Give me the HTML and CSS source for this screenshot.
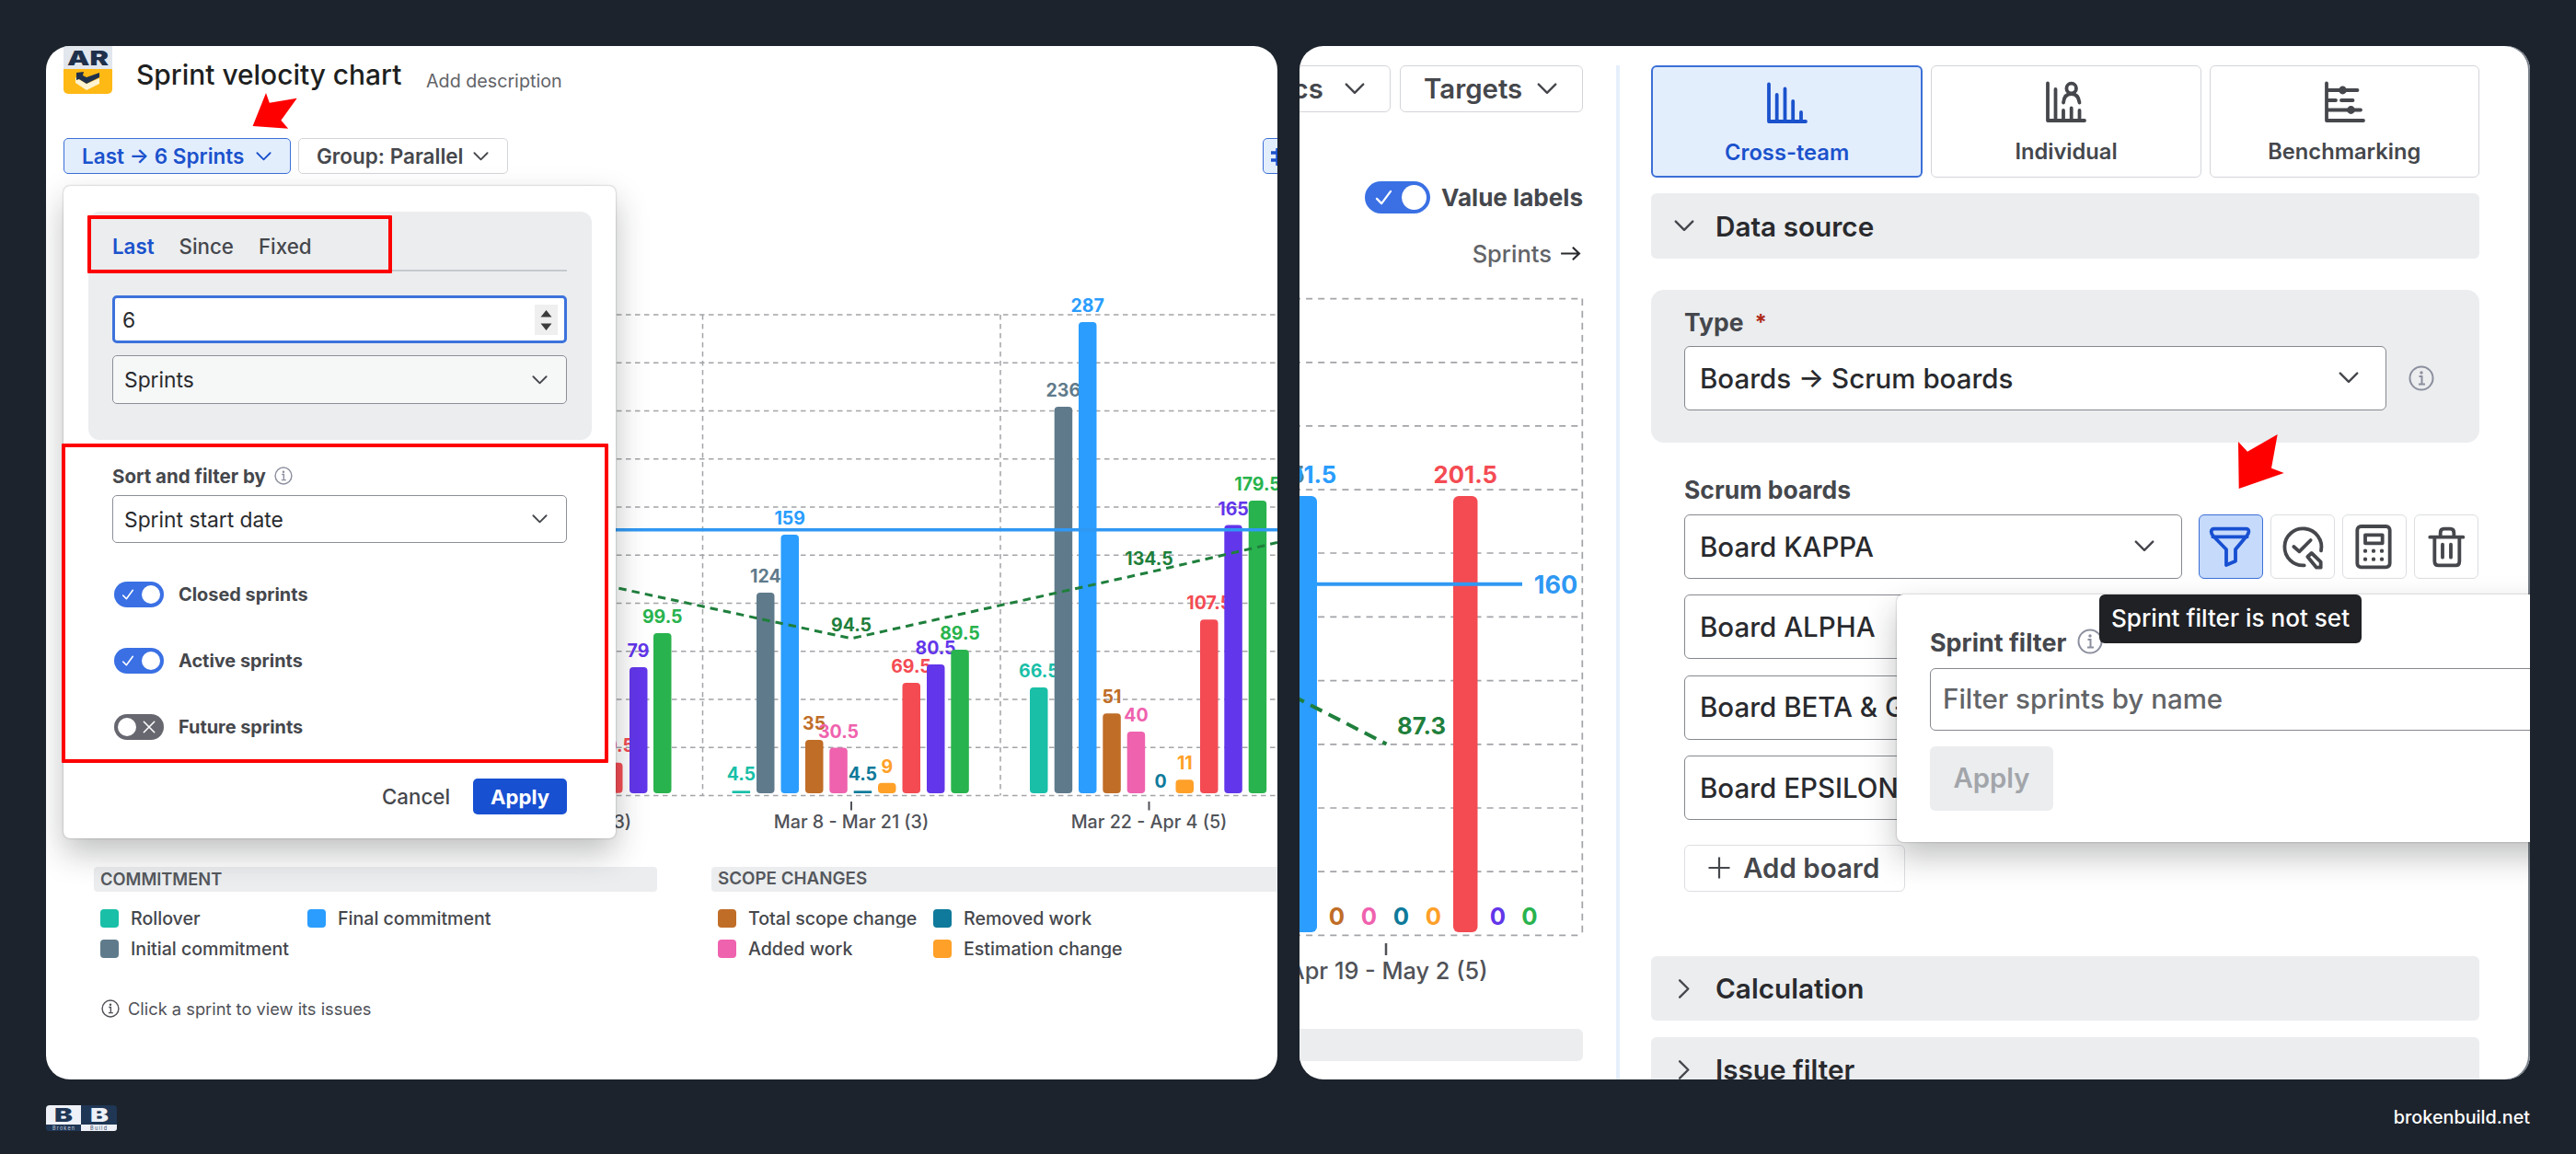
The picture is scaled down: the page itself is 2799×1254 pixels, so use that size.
FILE: index.html
```html
<!DOCTYPE html>
<html lang="en">
<head>
<meta charset="utf-8">
<title>Sprint velocity chart</title>
<link rel="stylesheet" href="styles.css">
</head>
<body>
<svg class="defs" aria-hidden="true">
  <symbol id="chevron" viewBox="0 0 20 12"><path d="M1.5 1.5 10 10l8.500-8.500" fill="none" stroke="currentColor" stroke-width="2.200" stroke-linecap="round" stroke-linejoin="round"/></symbol>
  <symbol id="info" viewBox="0 0 28 28"><g fill="none" stroke="currentColor" stroke-width="2"><circle cx="14" cy="14" r="12.500"/><path d="M11.500 12h3v8.500M11 20.500h7"/></g><circle cx="14" cy="8" r="1.700" fill="currentColor"/></symbol>
  <symbol id="check" viewBox="0 0 20 18"><path d="M2 10.500 7.500 16 18 2" fill="none" stroke="#fff" stroke-width="2.400" stroke-linecap="round" stroke-linejoin="round"/></symbol>
</svg>

<main class="stage">
  <section class="card card-chart">
    <header class="head">
      <svg class="app-logo" viewBox="0 0 53 52">
        <path d="M0 0h53v26H0z" fill="#e2e6ed"/>
        <path d="M0 25h53v22a5 5 0 0 1-5 5H5a5 5 0 0 1-5-5z" fill="#ffb915"/>
        <text x="4" y="21" textLength="45" lengthAdjust="spacingAndGlyphs" font-size="21.500" font-weight="900" fill="#20304b">AR</text>
        <path d="m13 34 12 7 14-6v6L25 48l-12-8z" fill="#fff3d0"/>
        <path d="m14 29 8-1-1 4 4 2 14-5v5l-14 7-8-5-3 1z" fill="#20304b"/>
      </svg>
      <h1 class="title">Sprint velocity chart</h1>
      <span class="desc">Add description</span>
    </header>
    <div class="toolbar">
      <button class="btn btn-active">Last → 6 Sprints <svg class="chev"><use href="#chevron"/></svg></button>
      <button class="btn btn-group">Group: Parallel <svg class="chev"><use href="#chevron"/></svg></button>
      <button class="btn btn-active btn-edge"><svg viewBox="0 0 24 24"><path d="M2 8h20M2 16h20M9 3v10M9 12v10" stroke="currentColor" stroke-width="3.500" fill="none"/></svg></button>
    </div>

    <svg class="chart" viewBox="50 189 1338 741">
      <g class="grid grid-s">
        <path d="M600 341.900H1388M600 394.200H1388M600 446.400H1388M600 498.700H1388M600 551H1388M600 603.200H1388M600 655.500H1388M600 707.800H1388M600 760H1388M600 812.300H1388M600 864.600H1388"/>
        <path d="M763.500 341.900V864.600M1087 341.900V864.600"/>
      </g>
      <g class="bars labels-s">
        <g class="red"><rect x="657" y="828.700" width="19.500" height="33" rx="4"/><text x="667" y="817">20.5</text></g>
        <g class="violet"><rect x="684" y="725" width="19.500" height="137" rx="4"/><text x="693.500" y="713.500">79</text></g>
        <g class="green"><rect x="710" y="688" width="19.500" height="174" rx="4"/><text x="719.700" y="676.500">99.5</text></g>

        <g class="teal"><rect x="795.600" y="859.300" width="19.500" height="2.700"/><text x="805.400" y="848">4.5</text></g>
        <g class="slate"><rect x="822" y="644" width="19.500" height="218" rx="4"/><text x="831.800" y="632.500">124</text></g>
        <g class="blue"><rect x="848.500" y="581" width="19.500" height="281" rx="4"/><text x="858.200" y="569.500">159</text></g>
        <g class="brown"><rect x="875" y="804" width="19.500" height="58" rx="4"/><text x="884.600" y="793">35</text></g>
        <g class="pink"><rect x="901.300" y="812.400" width="19.500" height="49.600" rx="4"/><text x="911" y="801.500">30.5</text></g>
        <g class="sea"><rect x="927.700" y="859.300" width="19.500" height="2.700"/><text x="937.400" y="848">4.5</text></g>
        <g class="orange"><rect x="954" y="850.800" width="19.500" height="11.200" rx="4"/><text x="963.800" y="839.500">9</text></g>
        <g class="red"><rect x="980.500" y="742" width="19.500" height="120" rx="4"/><text x="990" y="731">69.5</text></g>
        <g class="violet"><rect x="1007" y="722" width="19.500" height="140" rx="4"/><text x="1016.500" y="710.500">80.5</text></g>
        <g class="green"><rect x="1033.300" y="706" width="19.500" height="156" rx="4"/><text x="1043" y="695">89.5</text></g>

        <g class="teal"><rect x="1119" y="747" width="19.500" height="115" rx="4"/><text x="1128.900" y="736">66.5</text></g>
        <g class="slate"><rect x="1145.700" y="442" width="19.500" height="420" rx="4"/><text x="1155.300" y="430.500">236</text></g>
        <g class="blue"><rect x="1172" y="350" width="19.500" height="512" rx="4"/><text x="1181.700" y="338.700">287</text></g>
        <g class="brown"><rect x="1198.300" y="775.300" width="19.500" height="86.700" rx="4"/><text x="1208" y="764">51</text></g>
        <g class="pink"><rect x="1224.700" y="795" width="19.500" height="67" rx="4"/><text x="1234.500" y="784">40</text></g>
        <g class="sea"><text x="1261" y="856">0</text></g>
        <g class="orange"><rect x="1277.500" y="847.300" width="19.500" height="14.700" rx="4"/><text x="1287.300" y="836">11</text></g>
        <g class="red"><rect x="1304" y="673.300" width="19.500" height="188.700" rx="4"/><text x="1313.700" y="662">107.5</text></g>
        <g class="violet"><rect x="1330.300" y="570.500" width="19.500" height="291.500" rx="4"/><text x="1340" y="559.500">165</text></g>
        <g class="green"><rect x="1356.700" y="544" width="19.500" height="318" rx="4"/><text x="1366.500" y="532.500">179.5</text></g>
      </g>
      <path d="M600 575.800H1388" stroke="#2f98f3" stroke-width="3.500"/>
      <path d="M601.500 624 925 693.800 1248.500 621.900 1388 589.500" fill="none" stroke="#1f7f3c" stroke-width="3" stroke-dasharray="8.500 6"/>
      <g class="labels-s trend"><text x="925" y="686">94.5</text><text x="1248.500" y="613.800">134.5</text></g>
      <path d="M925 871v9.500M1248.500 871v9.500" stroke="#505258" stroke-width="2"/>
      <g class="axis-s"><text x="601.500" y="900">Feb 22 - Mar 7 (3)</text><text x="925" y="900">Mar 8 - Mar 21 (3)</text><text x="1248.500" y="900">Mar 22 - Apr 4 (5)</text></g>
    </svg>

    <div class="legends">
      <div class="legend">
        <h2 class="legend-title">COMMITMENT</h2>
        <ul class="keys keys-a">
          <li class="key"><i class="swatch bg-teal"></i>Rollover</li>
          <li class="key"><i class="swatch bg-blue"></i>Final commitment</li>
          <li class="key"><i class="swatch bg-slate"></i>Initial commitment</li>
        </ul>
      </div>
      <div class="legend">
        <h2 class="legend-title legend-title-wide">SCOPE CHANGES</h2>
        <ul class="keys keys-b">
          <li class="key"><i class="swatch bg-brown"></i>Total scope change</li>
          <li class="key"><i class="swatch bg-sea"></i>Removed work</li>
          <li class="key"><i class="swatch bg-pink"></i>Added work</li>
          <li class="key"><i class="swatch bg-orange"></i>Estimation change</li>
        </ul>
      </div>
    </div>
    <p class="hint"><svg class="hint-icon"><use href="#info"/></svg>Click a sprint to view its issues</p>

    <div class="pop pop-range">
      <div class="range">
        <nav class="tabs"><a class="tab tab-on">Last</a><a class="tab">Since</a><a class="tab">Fixed</a></nav>
        <div class="field field-num">6
          <svg class="spin" viewBox="0 0 25 33"><path d="M0 0h25v33H0z" fill="#efefef"/><path d="m12.500 6 6 7.500h-12zM12.500 28l6-7.500h-12z" fill="#3c3c3c"/></svg>
        </div>
        <div class="field field-muted">Sprints <svg class="chev"><use href="#chevron"/></svg></div>
      </div>
      <div class="sorting">
        <div class="label">Sort and filter by <svg class="info-s"><use href="#info"/></svg></div>
        <div class="field">Sprint start date <svg class="chev"><use href="#chevron"/></svg></div>
        <div class="switches">
          <div class="switch-row"><span class="toggle"><svg class="tick"><use href="#check"/></svg><i class="knob"></i></span>Closed sprints</div>
          <div class="switch-row"><span class="toggle"><svg class="tick"><use href="#check"/></svg><i class="knob"></i></span>Active sprints</div>
          <div class="switch-row"><span class="toggle toggle-off"><i class="knob"></i><svg class="cross" viewBox="0 0 16 16"><path d="m1.500 1.500 13 13m0-13-13 13" stroke="#fff" stroke-width="1.800" stroke-linecap="round"/></svg></span>Future sprints</div>
        </div>
        <div class="actions"><span class="cancel">Cancel</span><button class="apply">Apply</button></div>
      </div>
    </div>

    <div class="mark mark-tabs"></div>
    <div class="mark mark-filter"></div>
    <svg class="pointer pointer-a" viewBox="274 100 50 41"><path d="m289 101 3.800 10.700 29.900-5-17.300 24 7.800 9-38.600-2.700z" fill="#fe0000"/></svg>
  </section>

  <section class="card card-config">
    <div class="preview">
      <div class="preview-bar">
        <button class="btn-lg btn-metrics">Metrics <svg class="chev-lg"><use href="#chevron"/></svg></button>
        <button class="btn-lg btn-targets">Targets <svg class="chev-lg"><use href="#chevron"/></svg></button>
      </div>
      <div class="values"><span class="toggle toggle-lg"><svg class="tick"><use href="#check"/></svg><i class="knob"></i></span>Value labels</div>
      <div class="order">Sprints <svg class="order-arrow" viewBox="0 0 24 18"><path d="M1 9h21M14.500 1.800 22 9l-7.500 7.200" fill="none" stroke="#292a2e" stroke-width="2.300"/></svg></div>
      <svg class="chart-lg" viewBox="1412 292 308 800">
        <g class="grid grid-l">
          <path d="M1406 324.600H1716M1406 393.800H1716M1406 462.900H1716M1406 532.100H1716M1406 601H1716M1406 670.400H1716M1406 739.600H1716M1406 808.800H1716M1406 878H1716M1406 947.100H1716M1406 1016.300H1716"/>
          <path d="M1719.300 324.600V1016.300" stroke-dasharray="7.500 5.600"/>
        </g>
        <g class="labels-l">
          <g class="slate"><text x="1383" y="525">201.5</text></g>
          <g class="blue"><rect x="1404" y="539" width="27" height="474" rx="6"/><text x="1417.600" y="525">201.5</text></g>
          <g class="brown"><text x="1452.500" y="1004.800">0</text></g>
          <g class="pink"><text x="1487.500" y="1004.800">0</text></g>
          <g class="sea"><text x="1522.500" y="1004.800">0</text></g>
          <g class="orange"><text x="1557.500" y="1004.800">0</text></g>
          <g class="red"><rect x="1579" y="539" width="26.500" height="474" rx="6"/><text x="1592.300" y="525">201.5</text></g>
          <g class="violet"><text x="1627.300" y="1004.800">0</text></g>
          <g class="green"><text x="1662" y="1004.800">0</text></g>
          <path d="M1431 634.700H1654" stroke="#2f98f3" stroke-width="4"/>
          <g class="target"><text x="1690.500" y="645">160</text></g>
          <path d="m1408 758 98.500 50.500" fill="none" stroke="#1f7f3c" stroke-width="4" stroke-dasharray="14 8" stroke-dashoffset="4"/>
          <g class="trend"><text x="1544.500" y="797.500">87.3</text></g>
        </g>
        <path d="M1506 1025v13" stroke="#505258" stroke-width="2.500"/>
        <text class="axis-l" x="1616.500" y="1063.500">Apr 19 - May 2 (5)</text>
      </svg>
      <div class="preview-strip"></div>
    </div>
    <div class="divider"></div>

    <div class="config">
      <div class="modes">
        <div class="mode mode-on"><svg class="mode-icon" viewBox="0 0 45 46"><path d="M3 2.500V43H43M11.700 14v28M20.500 7.500v34M29.200 21v21M38 33v9"/></svg>Cross-team</div>
        <div class="mode"><svg class="mode-icon" viewBox="0 0 45 46"><path d="M3 2.500V43H43M11.500 9v33M20 32v10M28.700 29.500V42M37.500 32v10M20 23.500c.5-6 3.500-9.500 8.700-9.500s8 3.500 8.800 9.500"/><circle cx="28.700" cy="8" r="5.300"/></svg>Individual</div>
        <div class="mode"><svg class="mode-icon" viewBox="0 0 45 46"><path d="M3 2.500V43H43M3 10h33.500M3 21h10M19 21h12.500M3 31.500h37"/><circle cx="20.500" cy="10" r="2.500"/><circle cx="29.500" cy="31.500" r="2.500"/></svg>Benchmarking</div>
      </div>
      <div class="section"><svg class="chev-lg"><use href="#chevron"/></svg>Data source</div>
      <div class="type-box">
        <div class="label-lg">Type <span class="req">*</span></div>
        <div class="type-row">
          <div class="field-lg field-type">Boards → Scrum boards <svg class="chev-lg"><use href="#chevron"/></svg></div>
          <svg class="info-l"><use href="#info"/></svg>
        </div>
      </div>
      <div class="boards">
        <div class="label-lg label-boards">Scrum boards</div>
        <div class="board-row">
          <div class="field-lg field-board">Board KAPPA <svg class="chev-lg"><use href="#chevron"/></svg></div>
          <div class="tools">
            <button class="tool tool-on"><svg viewBox="0 0 210 210"><path d="M50 47H154Q164 47 163 57 162 65 155 72L120 114V152L90 165V114L49 72Q41 64 41 56 42 47 50 47ZM46 73H158"/></svg></button>
            <button class="tool"><svg viewBox="0 0 210 210"><path d="M165 118A60 60 0 1 0 110 166M76 105 94 121 131 84M121 138 134 126 164 155V173H150Z"/></svg></button>
            <button class="tool"><svg viewBox="0 0 210 210"><rect x="49" y="39" width="106" height="133" rx="12"/><rect x="75" y="67" width="56" height="27"/><path class="dots" d="M75 119h.1M102 119h.1M129 119h.1M75 146h.1M102 146h.1M129 146h.1"/></svg></button>
            <button class="tool"><svg viewBox="0 0 210 210"><path d="M52 74H160M86 72V60Q86 47 98 47H118Q130 47 130 60V72M67 76V152Q67 166 80 166H136Q148 166 148 152V76M93 98V140M120 98V140"/></svg></button>
          </div>
        </div>
        <div class="field-lg field-board">Board ALPHA</div>
        <div class="field-lg field-board">Board BETA &amp; GAMMA</div>
        <div class="field-lg field-board">Board EPSILON</div>
        <button class="add"><svg class="plus" viewBox="0 0 24 24"><path d="M12 .5v23M.5 12h23" stroke="currentColor" stroke-width="2.200"/></svg>Add board</button>
      </div>
      <div class="section section-calc"><svg class="chev-lg chev-side"><use href="#chevron"/></svg>Calculation</div>
      <div class="section section-filter"><svg class="chev-lg chev-side"><use href="#chevron"/></svg>Issue filter</div>
    </div>

    <div class="pop pop-sprint">
      <div class="label-lg">Sprint filter <svg class="info-l info-near"><use href="#info"/></svg></div>
      <div class="field-lg field-filter">Filter sprints by name</div>
      <button class="apply-off">Apply</button>
    </div>
    <div class="tooltip">Sprint filter is not set</div>
    <svg class="pointer pointer-b" viewBox="2431 471 52 61"><path d="m2432 480 10 10.700L2474.700 472l-6.700 36.700 13.700 5.300-49 17z" fill="#fe0000"/></svg>
  </section>
</main>

<footer class="foot">
  <svg class="bb" viewBox="0 0 77 28">
    <path d="M38 0h35a4 4 0 0 1 4 4v17H38z" fill="#1f3655"/><path d="M4 0h34v21H0V4a4 4 0 0 1 4-4z" fill="#eef1f7"/>
    <path d="M0 21h38v7H3a3 3 0 0 1-3-3z" fill="#1f3655"/><path d="M38 21h39v4a3 3 0 0 1-3 3H38z" fill="#eef1f7"/>
    <text x="9" y="18" textLength="20" lengthAdjust="spacingAndGlyphs" font-size="20.500" font-weight="900" fill="#1f3655">B</text>
    <text x="48" y="18" textLength="20" lengthAdjust="spacingAndGlyphs" font-size="20.500" font-weight="900" fill="#eef1f7">B</text>
    <text x="7" y="26.500" textLength="24" font-size="5.500" fill="#c5cddb">Broken</text>
    <text x="48" y="26.500" textLength="18" font-size="5.500" fill="#33476a">Build</text>
  </svg>
  <span class="site">brokenbuild.net</span>
</footer>
</body>
</html>
```
FILE: styles.css
```css
* { box-sizing: border-box; }
body {
  margin: 0;
  width: 2799px;
  height: 1254px;
  overflow: hidden;
  background: #1c232c;
  color: #292a2e;
  font-family: Inter, "Liberation Sans", sans-serif;
  font-weight: 400;
}
h1, h2, p, ul { margin: 0; padding: 0; list-style: none; }
button { font-family: inherit; padding: 0; background: none; border: 0; color: inherit; }
svg { display: block; flex: none; overflow: visible; }
.defs { position: absolute; width: 0; height: 0; }

.stage { display: flex; gap: 24px; padding: 50px 50px 0; height: 1173px; }
.card { position: relative; flex: none; overflow: hidden; height: 1123px; border-radius: 26px; background: #fff; }
.card-chart { width: 1338px; }
.card-config { display: flex; width: 1337px; box-shadow: inset -2px 0 0 #7a808a; }

/* header and toolbar */
.head { display: flex; align-items: center; height: 62px; padding-left: 19px; }
.app-logo { width: 53px; height: 52px; align-self: flex-start; }
.title { width: 289px; margin-left: 26px; font-size: 29.900px; font-weight: 500; line-height: 40px; white-space: nowrap; color: #1e1f21; }
.desc { margin-left: 26px; padding-top: 14px; font-size: 19.700px; line-height: 24px; color: #626468; }
.toolbar { display: flex; gap: 8px; height: 39px; margin-top: 38px; padding-left: 19px; }
.btn { display: flex; align-items: center; justify-content: space-between; height: 39px; padding: 0 20px 0 19px; border: 1.500px solid #d3d5d9; border-radius: 5px; font-size: 22.500px; font-weight: 600; white-space: nowrap; color: #45474c; }
.btn-active { width: 247px; border-color: #3b6fd6; background: #e3eefd; color: #1b52cc; }
.btn-group { width: 228px; }
.btn-edge { width: 39px; margin-left: auto; margin-right: -23px; padding: 0 6px; }
.btn-edge svg { width: 24px; height: 24px; }
.chev { width: 17px; height: 10px; }

/* sprint chart */
.chart { width: 1338px; height: 741px; }
.grid { fill: none; stroke: #a2a4a8; }
.grid-s { stroke-width: 1.500; stroke-dasharray: 5.500 4.500; }
.grid-l { stroke-width: 1.700; stroke-dasharray: 7 6.100; }
.labels-s { font-size: 19.500px; font-weight: 650; text-anchor: middle; }
.labels-l { font-size: 25.700px; font-weight: 700; text-anchor: middle; }
.axis-s { font-size: 19.700px; font-weight: 450; text-anchor: middle; fill: #505258; }
.axis-l { font-size: 25.300px; font-weight: 450; text-anchor: end; fill: #505258; }
.teal { fill: #1abfa8; }
.slate { fill: #5f7b8b; }
.blue { fill: #2a9dff; }
.brown { fill: #c06d27; }
.pink { fill: #ef62ae; }
.sea { fill: #0f7a9b; }
.orange { fill: #ffa028; }
.red { fill: #f44b53; }
.violet { fill: #6236ea; }
.green { fill: #29b34e; }
.trend { fill: #1f7f3c; }
.target { font-size: 27px; fill: #2f98f3; }
.bg-teal { background: #1abfa8; }
.bg-slate { background: #5f7b8b; }
.bg-blue { background: #2a9dff; }
.bg-brown { background: #c06d27; }
.bg-pink { background: #ef62ae; }
.bg-sea { background: #0f7a9b; }
.bg-orange { background: #ffa028; }

/* legend */
.legends { display: flex; gap: 59px; padding: 12px 0 0 52px; }
.legend { width: 612px; }
.legend-title { height: 27px; padding-left: 7px; border-radius: 4px; background: #ebedef; font-size: 18.300px; font-weight: 600; line-height: 26px; color: #55585d; }
.legend-title-wide { width: 640px; font-size: 18.800px; }
.keys { display: grid; gap: 13px 0; padding: 19px 0 0 7px; }
.keys-a { grid-template-columns: 225px 1fr; }
.keys-b { grid-template-columns: 234px 1fr; }
.key { display: flex; align-items: center; gap: 13px; height: 20px; overflow: hidden; font-size: 19.600px; font-weight: 450; line-height: 22px; white-space: nowrap; color: #45474c; }
.swatch { width: 20px; height: 20px; border-radius: 4px; }
.hint { display: flex; align-items: center; gap: 9px; height: 20px; margin-top: 45px; padding-left: 60px; font-size: 18.300px; color: #505258; }
.hint-icon { width: 20px; height: 20px; }

/* popovers */
.pop { position: absolute; border-radius: 7px; background: #fff; box-shadow: 0 0 2px rgba(30, 31, 33, .4), 0 16px 34px rgba(30, 31, 33, .28); }
.pop-range { left: 19px; top: 152px; width: 600px; height: 709px; padding: 28px 26px 0 27px; }
.range { height: 248px; padding: 0 27px 0 26px; border-radius: 12px; background: #ebedef; }
.tabs { display: flex; gap: 27px; height: 65px; padding-top: 12px; border-bottom: 2px solid #c6c9cd; }
.tab { font-size: 22.300px; font-weight: 550; line-height: 52px; color: #45474c; }
.tab-on { font-weight: 600; color: #1b52cc; }
.field { display: flex; align-items: center; justify-content: space-between; height: 52px; padding: 0 20px 0 12px; border: 1.500px solid #8c8f97; border-radius: 5px; background: #fff; font-size: 22.800px; white-space: nowrap; }
.field-num { margin: 26px 0 13px; padding: 0 7px 0 8px; border: 3px solid #3d72dc; }
.spin { width: 25px; height: 33px; }
.field-muted { height: 53px; background: #f6f7f7; }
.chev, .chev-lg { color: #45474c; }
.btn-active .chev { color: inherit; }
.sorting { padding: 29px 27px 0 26px; }
.label { display: flex; align-items: center; gap: 9px; height: 20px; margin-bottom: 11px; font-size: 20.500px; font-weight: 650; color: #45474c; }
.info-s { width: 20px; height: 20px; color: #8c8f9e; }
.switches { display: flex; flex-direction: column; gap: 44px; padding: 42px 0 0 2px; }
.switch-row { display: flex; align-items: center; gap: 16px; height: 28px; font-size: 19.900px; font-weight: 650; color: #45474c; }
.toggle { display: flex; align-items: center; justify-content: space-between; width: 54px; height: 28px; padding: 0 4px 0 8px; border-radius: 14px; background: #3a70e4; }
.toggle-off { padding: 0 9px 0 4px; background: #66676f; }
.knob { width: 20px; height: 20px; border-radius: 50%; background: #fff; }
.tick { width: 14px; height: 12px; }
.cross { width: 14px; height: 14px; }
.actions { display: flex; align-items: center; justify-content: flex-end; gap: 25px; margin-top: 42px; }
.cancel { font-size: 22.300px; font-weight: 550; color: #45474c; }
.apply { width: 102px; height: 39px; border-radius: 5px; background: #1850d2; color: #fff; font-size: 22.100px; font-weight: 650; }

/* annotations */
.mark { position: absolute; border: 4px solid #fe0000; border-radius: 1px; }
.mark-tabs { left: 45px; top: 184px; width: 331px; height: 63px; }
.mark-filter { left: 17px; top: 432px; width: 594px; height: 347px; }
.pointer { position: absolute; }
.pointer-a { left: 224px; top: 50px; width: 50px; height: 41px; }
.pointer-b { left: 1019px; top: 421px; width: 52px; height: 61px; }

/* chart preview beside the settings */
.preview { width: 308px; padding-top: 21px; flex: none; }
.preview-bar { display: flex; justify-content: flex-end; gap: 10px; height: 51px; }
.btn-lg { display: flex; flex: none; align-items: center; justify-content: space-between; height: 51px; border: 1.500px solid #d3d5d9; border-radius: 6px; font-size: 29.400px; font-weight: 600; color: #45474c; }
.btn-metrics { width: 190px; padding: 0 27px 0 8px; }
.btn-targets { width: 199px; padding: 0 27px 0 25px; }
.chev-lg { width: 22px; height: 13px; }
.values { display: flex; align-items: center; justify-content: flex-end; gap: 12px; height: 35px; margin-top: 75px; font-size: 26.100px; font-weight: 700; color: #45474c; }
.toggle-lg { width: 71px; height: 35px; padding: 0 4px 0 11px; border-radius: 18px; }
.toggle-lg .knob { width: 27px; height: 27px; }
.toggle-lg .tick { width: 19px; height: 17px; }
.order { display: flex; align-items: center; justify-content: flex-end; gap: 9px; height: 32px; margin-top: 27px; padding-right: 2px; font-size: 25.500px; font-weight: 450; color: #626468; }
.order-arrow { width: 23px; height: 17px; }
.chart-lg { width: 308px; height: 800px; margin-top: 1px; }
.preview-strip { height: 35px; margin-top: 26px; border-radius: 0 6px 6px 0; background: #ebedef; }
.divider { flex: none; width: 4px; margin: 21px 0 0 36px; background: #e5effc; }

/* settings panel */
.config { flex: none; width: 900px; margin-left: 34px; padding-top: 21px; }
.modes { display: flex; gap: 9px; height: 122px; }
.mode { display: flex; flex: 1; flex-direction: column; align-items: center; padding-top: 16px; border: 1.500px solid #d3d5d9; border-radius: 6px; font-size: 23.700px; font-weight: 600; line-height: 30px; color: #45474c; }
.mode-on { border: 2px solid #3b6fd6; background: #e3eefd; color: #1b52cc; }
.mode-icon { width: 45px; height: 46px; margin-bottom: 16px; fill: none; stroke: currentColor; stroke-width: 3.800; stroke-linecap: round; stroke-linejoin: round; }
.section { display: flex; align-items: center; gap: 23px; height: 71px; margin-top: 17px; padding-left: 25px; border-radius: 6px; background: #ebedef; font-size: 29.700px; font-weight: 600; color: #292a2e; }
.section-calc { height: 70px; margin-top: 70px; }
.section-filter { height: 70px; margin-top: 18px; }
.chev-side { transform: rotate(-90deg); }
.type-box { height: 166px; margin-top: 34px; padding: 24px 36px 0; border-radius: 14px; background: #ebedef; }
.label-lg { display: flex; align-items: center; gap: 12px; height: 21px; font-size: 26.500px; font-weight: 650; color: #45474c; white-space: nowrap; }
.req { padding-top: 2px; font-size: 24px; color: #ae2a19; }
.type-row { display: flex; align-items: center; gap: 24px; margin-top: 16px; }
.field-lg { display: flex; align-items: center; justify-content: space-between; height: 70px; padding: 0 29px 1px 16px; border: 1.500px solid #85888e; border-radius: 6px; background: #fff; font-size: 29.500px; font-weight: 450; white-space: nowrap; }
.field-type { width: 763px; }
.info-l { width: 28px; height: 28px; color: #8c8f9e; }
.boards { display: flex; flex-direction: column; align-items: flex-start; gap: 17.400px; padding: 39px 0 0 36px; }
.label-boards { height: 24px; margin-bottom: -2.400px; }
.board-row { display: flex; gap: 18px; }
.field-board { width: 541px; }
.tools { display: flex; gap: 8px; }
.tool { width: 70px; height: 70px; border: 1.500px solid #dcdee1; border-radius: 6px; color: #45474c; }
.tool svg { width: 70px; height: 70px; margin: -1.500px; fill: none; stroke: currentColor; stroke-width: 11.500; stroke-linecap: round; stroke-linejoin: round; }
.tool .dots { stroke-width: 13; }
.tool-on { border-color: #3b6fd6; background: #c6dafb; color: #1850d2; }
.add { display: flex; align-items: center; gap: 14px; width: 240px; height: 51px; margin-top: 9.600px; padding-left: 25px; padding-bottom: 1px; border: 1.500px solid #dcdee1; border-radius: 6px; font-size: 29.500px; font-weight: 600; color: #45474c; }
.plus { width: 24px; height: 24px; }

.pop-sprint { left: 649px; top: 596px; width: 740px; height: 269px; padding: 39px 36px 0; }
.pop-sprint .label-lg { height: 26px; font-size: 26.900px; }
.info-near { margin-top: -3px; }
.field-filter { height: 68px; margin: 15px 0 17px; padding: 0 0 2px 13px; color: #626468; }
.apply-off { width: 134px; height: 70px; padding-bottom: 1px; border-radius: 6px; background: #ebedef; color: #a2a5aa; font-size: 29.300px; font-weight: 600; }
.tooltip { position: absolute; left: 869px; top: 596px; width: 285px; height: 53px; border-radius: 6px; background: #1f2125; color: #fff; font-size: 26.100px; font-weight: 450; line-height: 52px; text-align: center; white-space: nowrap; }

.foot { display: flex; align-items: center; justify-content: space-between; height: 81px; padding: 3px 50px 0; color: #fff; }
.bb { width: 77px; height: 28px; }
.site { font-size: 19.800px; font-weight: 550; line-height: 28px; margin-top: -2px; }
```
